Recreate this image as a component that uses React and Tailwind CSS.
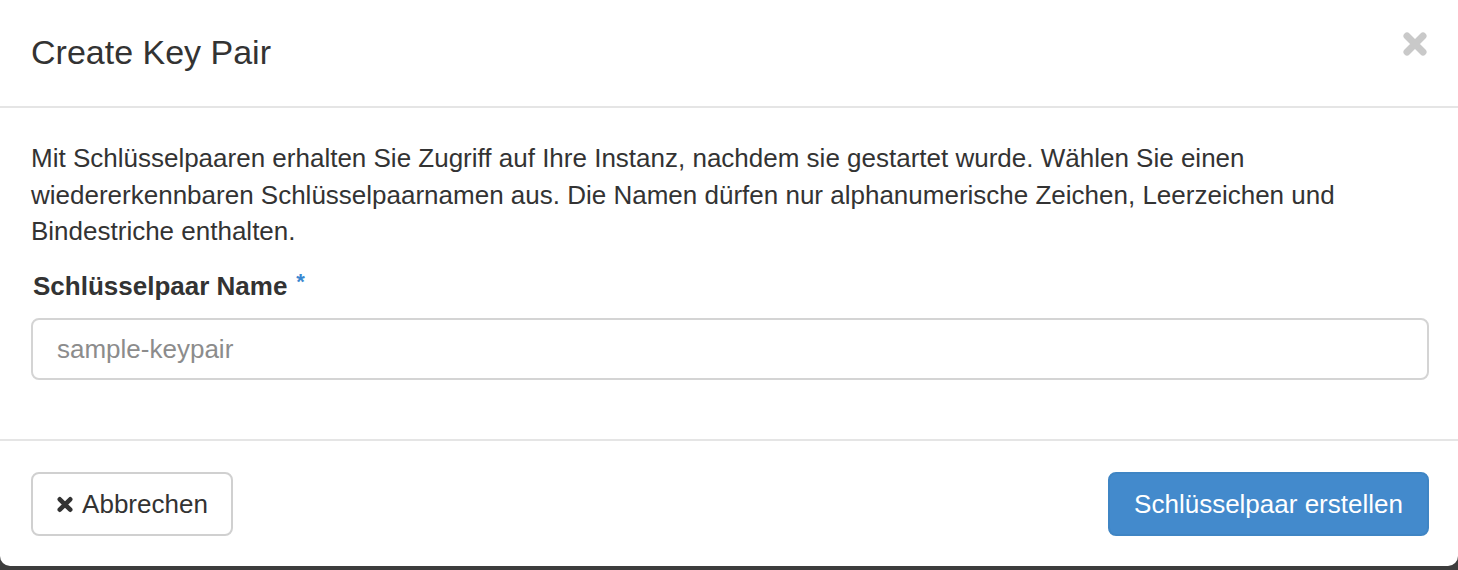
import React from 'react';

function TimesIcon({ className }) {
  // thick "times" glyph like the font-awesome one
  return (
    <svg viewBox="0 0 26 26" className={className} fill="none">
      <path d="M5 5 L21 21 M21 5 L5 21" stroke="currentColor" strokeWidth="7" strokeLinecap="round" />
    </svg>
  );
}

export default function App() {
  return (
    <div className="h-[570px] bg-[#3d3d3d] font-['Liberation_Sans',Arial,sans-serif] text-[#333]">
      <div className="h-[566px] bg-white rounded-b-[10px] flex flex-col">
        {/* Header */}
        <div className="h-[108px] border-b-2 border-[#e5e5e5] flex items-center justify-between pl-[31px] pr-[30px] pb-[2px]">
          <h4 className="text-[34px] leading-[47px] text-[#333] font-normal">Create Key Pair</h4>
          <button className="text-[#c9c9c9] -mt-[16px]">
            <TimesIcon className="w-[26px] h-[26px]" />
          </button>
        </div>

        {/* Body */}
        <div className="pl-[31px] pr-[29px] pt-[32px] h-[333px] border-b-2 border-[#e5e5e5]">
          <p className="text-[26px] leading-[36.5px] mb-[18px]">
            Mit Schlüsselpaaren erhalten Sie Zugriff auf Ihre Instanz, nachdem sie gestartet wurde. Wählen Sie einen wiedererkennbaren Schlüsselpaarnamen aus. Die Namen dürfen nur alphanumerische Zeichen, Leerzeichen und Bindestriche enthalten.
          </p>
          <label className="flex items-start text-[26px] leading-[36.5px] font-bold pl-[2px]">
            Schlüsselpaar Name
            <span className="text-[#3a87d0] text-[22px] leading-none ml-[9px] mt-[3px]">*</span>
          </label>
          <input
            type="text"
            placeholder="sample-keypair"
            className="mt-[14px] w-full h-[62px] border-2 border-[#d4d4d4] rounded-[8px] px-[24px] text-[26px] text-[#555] placeholder:text-[#8c8c8c] outline-none"
          />
        </div>

        {/* Footer */}
        <div className="flex-1 flex items-start justify-between pl-[31px] pt-[31px] pr-[29px]">
          <button className="h-[64px] w-[202px] border-2 border-[#d0d0d0] rounded-[8px] bg-white flex items-center justify-center gap-[8px] text-[26px] text-[#333]">
            <TimesIcon className="w-[18px] h-[17px]" />
            Abbrechen
          </button>
          <button className="h-[64px] w-[321px] border-2 border-[#3f85c4] rounded-[8px] bg-[#438acc] flex items-center justify-center text-[26px] text-white">
            Schlüsselpaar erstellen
          </button>
        </div>
      </div>
    </div>
  );
}
